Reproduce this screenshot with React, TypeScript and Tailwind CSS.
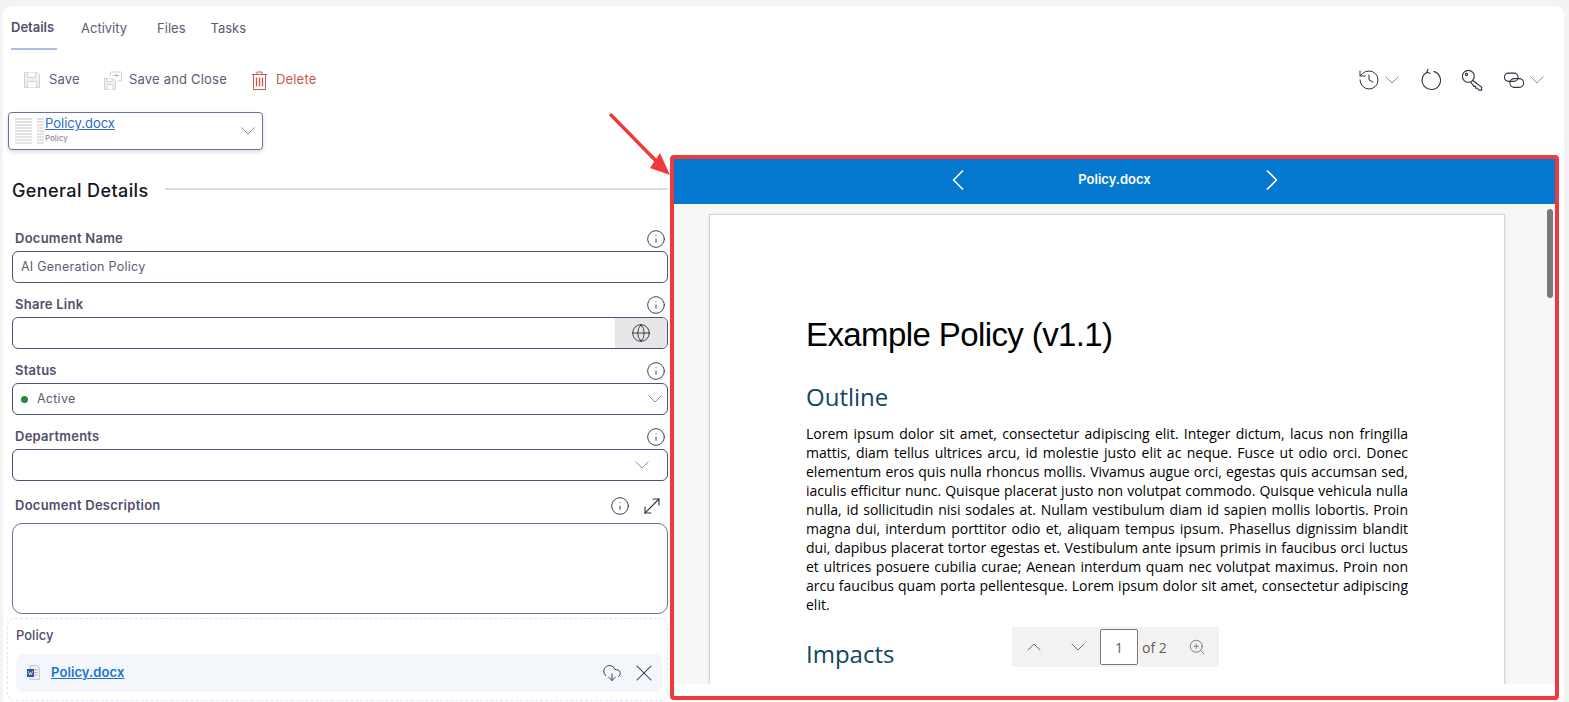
import { ChevronDown, ChevronLeft, ChevronRight, ChevronUp, CloudDownload, Globe, History, Info, MoveDiagonal, X, ZoomIn } from 'lucide-react'

const ui = "font-['Inter','Liberation_Sans',sans-serif]"

const body = `Lorem ipsum dolor sit amet, consectetur adipiscing elit. Integer dictum, lacus non fringilla mattis, diam tellus ultrices arcu, id molestie justo elit ac neque. Fusce ut odio orci. Donec elementum eros quis nulla rhoncus mollis. Vivamus augue orci, egestas quis accumsan sed, iaculis efficitur nunc. Quisque placerat justo non volutpat commodo. Quisque vehicula nulla nulla, id sollicitudin nisi sodales at. Nullam vestibulum diam id sapien mollis lobortis. Proin magna dui, interdum porttitor odio et, aliquam tempus ipsum. Phasellus dignissim blandit dui, dapibus placerat tortor egestas et. Vestibulum ante ipsum primis in faucibus orci luctus et ultrices posuere cubilia curae; Aenean interdum quam nec volutpat maximus. Proin non arcu faucibus quam porta pellentesque. Lorem ipsum dolor sit amet, consectetur adipiscing elit.`

function Caret() {
  return (
    <svg className="h-[8px] w-[14px] shrink-0" viewBox="0 0 14 8" fill="none" stroke="#8b8fa3" strokeWidth="1">
      <path d="M0.5 0.5 L7 7 L13.5 0.5" />
    </svg>
  )
}

function FloppyIcon() {
  return (
    <svg className="h-[16px] w-[16px] shrink-0" viewBox="0 0 16 16" fill="#f1f1f1" stroke="#d2d2d2" strokeWidth="1">
      <path d="M0.5 0.5 H13 L15.5 3 V15.5 H0.5 Z" />
      <path d="M3.5 0.5 V5.5 H11.5 V0.5" fill="#fff" />
      <path d="M3.5 15.5 V9.5 H12.5 V15.5" fill="#fff" />
    </svg>
  )
}

function SaveCloseIcon() {
  return (
    <svg className="h-[19px] w-[18px] shrink-0" viewBox="0 0 18 19" fill="none" stroke="#d2d2d2" strokeWidth="1">
      <path d="M0.5 7.5 H9 L11.5 10 V18.5 H0.5 Z" fill="#f1f1f1" />
      <path d="M3 18.5 V13.5 H9 V18.5 M3 7.5 V10.5 H8 V7.5" fill="#fff" />
      <path d="M6.5 5 V1 H17.5 V10 H13" />
      <path d="M9 4.5 H14 M12 2.5 L14 4.5 L12 6.5" stroke="#b5b5b5" />
    </svg>
  )
}

function TrashIcon() {
  return (
    <svg className="h-[19px] w-[15px] shrink-0" viewBox="0 0 15 19" fill="none" stroke="#c9564f" strokeWidth="1">
      <path d="M0 3.5 H15 M5 3.5 V1 H10 V3.5" />
      <path d="M1.5 3.5 V18.5 H13.5 V3.5" />
      <path d="M4.5 6.5 V15.5 M7.5 6.5 V15.5 M10.5 6.5 V15.5" strokeWidth="1.3" />
    </svg>
  )
}

function RefreshIcon() {
  return (
    <svg className="ml-[20px] h-[24px] w-[24px] shrink-0" viewBox="0 0 24 24" fill="none" stroke="#2f3142" strokeWidth="1.1">
      <path d="M14.5 3.4 A9.2 9.2 0 1 1 8 4.2" />
      <path d="M9 0.8 L8 4.2 L11.5 5.4" />
    </svg>
  )
}

function KeyIcon() {
  return (
    <svg className="ml-[18px] h-[22px] w-[22px] shrink-0" viewBox="0 0 24 24" fill="none" stroke="#2f3142" strokeWidth="1.2">
      <circle cx="8" cy="8" r="6.5" />
      <circle cx="6" cy="6" r="1.2" />
      <path d="M13 12.5 L22.5 20 V23 H19.5 L18 21 H16 V19 H14 L10.5 14.2" />
    </svg>
  )
}

function ChainIcon() {
  return (
    <svg className="ml-[20px] h-[22px] w-[22px] shrink-0" viewBox="0 0 24 24" fill="none" stroke="#2f3142" strokeWidth="1.2">
      <rect x="1.5" y="4.5" width="15" height="9" rx="4.5" />
      <rect x="7.5" y="10.5" width="15" height="9.5" rx="4.7" />
    </svg>
  )
}

function WordIcon() {
  return (
    <svg className="h-[15px] w-[13px] shrink-0" viewBox="0 0 13 15" fill="none">
      <path d="M3 0.5 H10 L12.5 3 V14.5 H3 Z" fill="#f0f0f2" stroke="#c9c9cf" />
      <path d="M7 5 H11 M7 7.5 H11 M7 10 H11" stroke="#b8b8c0" />
      <rect x="0" y="4" width="7" height="8" fill="#2b579a" />
      <path d="M1.5 6 L2.5 10 L3.5 7.5 L4.5 10 L5.5 6" stroke="#fff" strokeWidth="0.7" />
    </svg>
  )
}

function FieldLabel({ label, expand }: { label: string; expand?: boolean }) {
  return (
    <div className="flex h-[22px] items-center justify-between pl-[3px] pr-[2px]">
      <span className="text-[13px] font-semibold tracking-[0.25px] text-[#50506a]">{label}</span>
      <span className="flex items-center gap-[10px]">
        <Info className="h-[20px] w-[20px] text-[#2f3142]" strokeWidth={1.1} />
        {expand && <MoveDiagonal className="mr-[2px] h-[24px] w-[24px] text-[#2f3142]" strokeWidth={1.1} />}
      </span>
    </div>
  )
}

function Thumb() {
  return (
    <div className="flex h-[26px] w-[29px] shrink-0 gap-[5px]">
      <div className="flex w-[17px] flex-col justify-center gap-[1px]">
        {[0, 1, 2, 3, 4, 5, 6, 7, 8].map((i) => (
          <div key={i} className="h-[2px] bg-[#e2e2e2]" />
        ))}
      </div>
      <div className="flex w-[7px] flex-col justify-center gap-[1px]">
        {[0, 1, 2, 3, 4, 5, 6, 7, 8].map((i) => (
          <div key={i} className="h-[2px] bg-[#e2e2e2]" />
        ))}
      </div>
    </div>
  )
}

function Document() {
  return (
    <div className="relative min-h-0 flex-1 overflow-hidden bg-[#f8f7f6]">
      <div className="ml-[35px] mt-[10px] h-[520px] w-[796px] border border-[#d4d4d4] bg-white pl-[96px] pr-[96px] pt-[96px] shadow-sm">
        <h1 className="font-['Liberation_Sans',sans-serif] text-[33px] leading-[48px] tracking-[-0.6px] text-black">Example Policy (v1.1)</h1>
        <h2 className="mt-[22px] font-['Open_Sans',sans-serif] text-[24px] leading-[32px] text-[#0f4761]">Outline</h2>
        <p className="mt-[11px] text-justify font-['Open_Sans',sans-serif] text-[14px] leading-[19px] text-black">{body}</p>
        <h2 className="mt-[24px] font-['Open_Sans',sans-serif] text-[24px] leading-[32px] text-[#0f4761]">Impacts</h2>
      </div>
      {/* scrollbar */}
      <div className="absolute right-[2px] top-[5px] h-[89px] w-[6px] rounded-full bg-[#7a7a7a]" />
      {/* page controls */}
      <div className="absolute bottom-[17px] left-[338px] flex h-[40px] w-[207px] items-center bg-[#f3f2f1] font-['Open_Sans',sans-serif] text-[14px] text-[#605e5c]">
        <ChevronUp className="ml-[10px] h-[24px] w-[24px]" strokeWidth={0.9} />
        <ChevronDown className="ml-[20px] h-[24px] w-[24px]" strokeWidth={0.9} />
        <div className="ml-[10px] flex h-[36px] w-[38px] items-center justify-center rounded-[2px] border border-[#7a7a7a] bg-white">1</div>
        <span className="ml-[4px]">of 2</span>
        <ZoomIn className="ml-[21px] h-[18px] w-[18px]" strokeWidth={1} />
      </div>
    </div>
  )
}

export default function App() {
  return (
    <div className={`h-[702px] w-[1569px] overflow-hidden bg-[#f3f3f3] pl-[3px] pr-[5px] pt-[6px] ${ui}`}>
      <div className="relative h-[696px] rounded-t-[8px] bg-white">
        {/* Tabs */}
        <div className="flex h-[44px] items-start pl-[8px] text-[13px] text-[#5c5c74]">
          <div className="flex h-[44px] w-[46px] items-center border-b-2 border-[#a9bde4] pt-[2px] font-semibold text-[#50506a]">Details</div>
          <div className="ml-[24px] flex h-[44px] items-center pt-[2px]">Activity</div>
          <div className="ml-[30px] flex h-[44px] items-center pt-[2px]">Files</div>
          <div className="ml-[25px] flex h-[44px] items-center pt-[2px]">Tasks</div>
        </div>

        {/* Toolbar */}
        <div className="flex h-[60px] items-center pl-[21px] pr-[20px] text-[13px] tracking-[0.2px]">
          <FloppyIcon />
          <span className="ml-[9px] text-[#5c5c74]">Save</span>
          <span className="ml-[24px]"><SaveCloseIcon /></span>
          <span className="ml-[7px] text-[#5c5c74]">Save and Close</span>
          <span className="ml-[25px]"><TrashIcon /></span>
          <span className="ml-[9px] text-[#c9564f]">Delete</span>
          <div className="ml-auto flex items-center text-[#2f3142]">
            <History className="h-[24px] w-[24px]" strokeWidth={1} />
            <span className="ml-[4px]"><Caret /></span>
            <RefreshIcon />
            <KeyIcon />
            <ChainIcon />
            <span className="ml-[5px]"><Caret /></span>
          </div>
        </div>

        <div className="flex items-start">
          {/* Left column */}
          <div className="w-[665px] shrink-0 pt-[2px]">
            <div className="ml-[5px] flex h-[38px] w-[255px] items-center rounded-[4px] border border-[#6273a3] pl-[6px] pr-[7px] shadow-[0_2px_4px_rgba(0,0,0,0.15)]">
              <Thumb />
              <div className="ml-[1px] min-w-0 flex-1">
                <div className="-mt-[2px] text-[13px] leading-[15px] text-[#2a6cc7] underline">Policy.docx</div>
                <div className="mt-[2px] text-[8px] leading-[11px] text-[#7a7a92]">Policy</div>
              </div>
              <Caret />
            </div>

            <div className="mt-[25px] flex h-[28px] items-center pl-[9px]">
              <span className="mt-[3px] text-[18px] font-medium tracking-[0.4px] text-[#15151f]">General Details</span>
              <div className="ml-[16px] h-[2px] flex-1 bg-[#d9dbe6]" />
            </div>

            <div className="mt-[25px] flex flex-col pl-[9px]">
              <FieldLabel label="Document Name" />
              <div className="mt-[1px] flex h-[32px] items-center rounded-[6px] border border-[#4a5578] pl-[8px] text-[12.5px] tracking-[0.25px] text-[#5c5c74]">AI Generation Policy</div>

              <div className="mt-[11px]"><FieldLabel label="Share Link" /></div>
              <div className="mt-[1px] flex h-[32px] justify-end overflow-hidden rounded-[6px] border border-[#4a5578]">
                <div className="flex w-[52px] items-center justify-center bg-[#e6e6e6]">
                  <Globe className="h-[20px] w-[20px] text-[#2f3142]" strokeWidth={1.1} />
                </div>
              </div>

              <div className="mt-[11px]"><FieldLabel label="Status" /></div>
              <div className="mt-[1px] flex h-[32px] items-center rounded-[6px] border border-[#4a5578] pl-[8px] pr-[5px] text-[12.5px] tracking-[0.25px] text-[#5c5c74]">
                <span className="h-[7px] w-[7px] rounded-full bg-[#1e8a3c]" />
                <span className="ml-[9px] flex-1">Active</span>
                <Caret />
              </div>

              <div className="mt-[11px]"><FieldLabel label="Departments" /></div>
              <div className="mt-[1px] flex h-[32px] items-center justify-end rounded-[6px] border border-[#4a5578] pr-[18px]">
                <Caret />
              </div>

              <div className="mt-[14px]"><FieldLabel label="Document Description" expand /></div>
              <div className="mt-[6px] h-[91px] rounded-[10px] border border-[#6273a3]" />
            </div>

            <div className="ml-[4px] mt-[4px] h-[83px] rounded-[8px] border border-dashed border-[#dbe4f3] pl-[8px] pr-[4px] pt-[7px]">
              <div className="text-[13px] font-medium text-[#50506a]">Policy</div>
              <div className="mt-[8px] flex h-[38px] items-center rounded-[8px] bg-[#f3f6fb] pl-[11px] pr-[5px]">
                <WordIcon />
                <span className="ml-[11px] flex-1 text-[13px] font-semibold tracking-[0.1px] text-[#1a73d4] underline">Policy.docx</span>
                <CloudDownload className="h-[20px] w-[20px] text-[#2f3142]" strokeWidth={1.1} />
                <X className="ml-[8px] h-[28px] w-[28px] text-[#2f3142]" strokeWidth={0.9} />
              </div>
            </div>
          </div>

          {/* Preview panel */}
          <div className="ml-[2px] mt-[45px] flex h-[545px] w-[889px] shrink-0 flex-col overflow-hidden rounded-[4px] border-[4px] border-[#ee3a3d]">
            <div className="flex h-[45px] shrink-0 items-center justify-center bg-[#0479cf] pb-[3px] text-white">
              <ChevronLeft className="h-[36px] w-[36px]" strokeWidth={1.1} />
              <span className="w-[278px] text-center text-[13px] font-semibold">Policy.docx</span>
              <ChevronRight className="h-[36px] w-[36px]" strokeWidth={1.1} />
            </div>
            <Document />
            <div className="h-[12px] shrink-0 bg-white" />
          </div>
        </div>

        {/* Annotation arrow */}
        <svg className="absolute left-[600px] top-[100px] h-[75px] w-[75px]" viewBox="0 0 75 75" fill="none">
          <path d="M8 9 L58 60" stroke="#ee3a3d" strokeWidth="3.5" strokeLinecap="round" />
          <path d="M67 69 L47 62 L57 47 Z" fill="#ee3a3d" />
        </svg>
      </div>
    </div>
  )
}
